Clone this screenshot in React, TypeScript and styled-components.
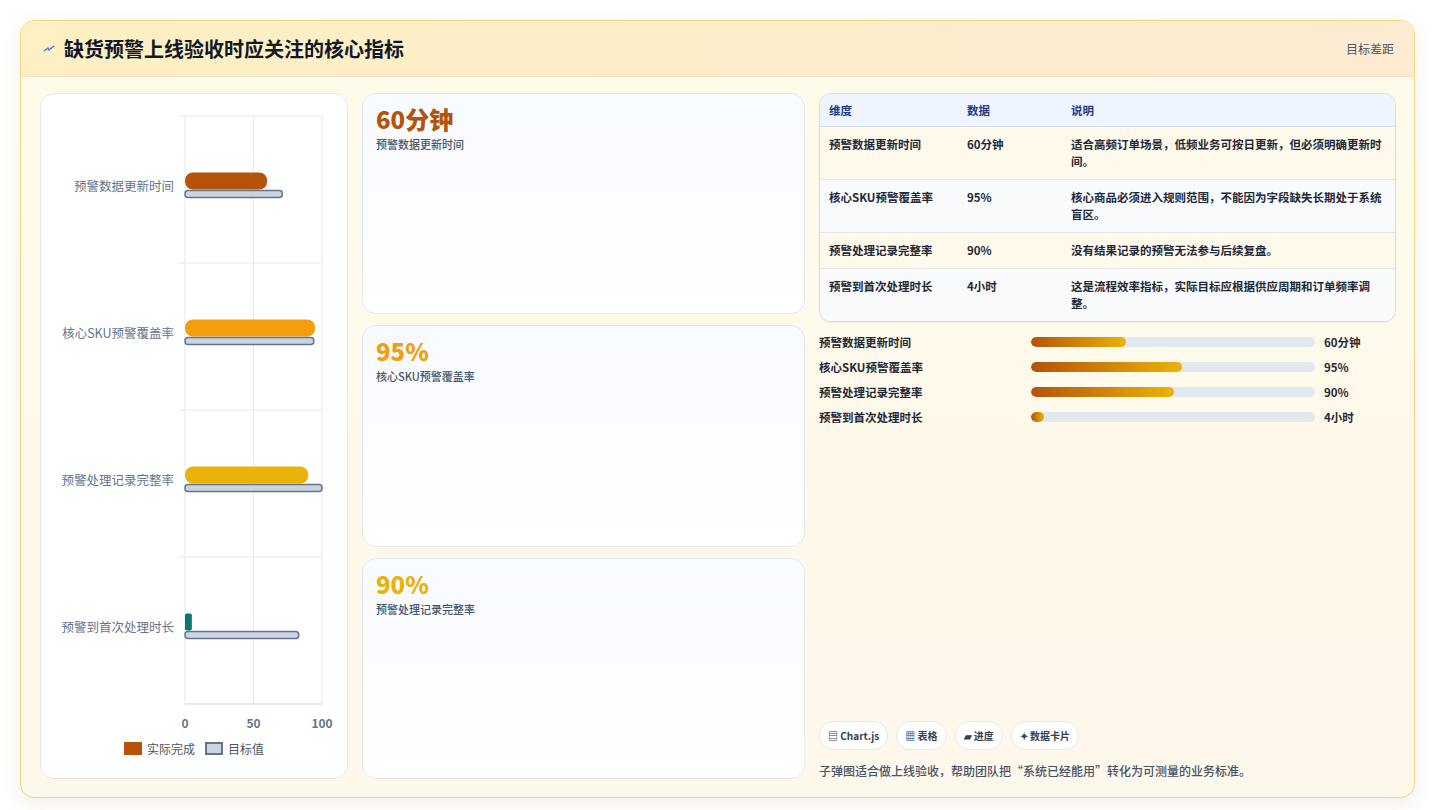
import React from "react";
import styled, { createGlobalStyle } from "styled-components";

const Global = createGlobalStyle`
  html, body { margin: 0; padding: 0; background: #fff; }
  body { font-family: "Noto Sans CJK SC", "Noto Sans", sans-serif; }
`;

const metrics = [
  { name: "预警数据更新时间", value: "60分钟", actual: 60, target: 71, color: "#b45309", pct: 33.5, note: "适合高频订单场景，低频业务可按日更新，但必须明确更新时间。" },
  { name: "核心SKU预警覆盖率", value: "95%", actual: 95, target: 94, color: "#f59e0b", pct: 53, note: "核心商品必须进入规则范围，不能因为字段缺失长期处于系统盲区。" },
  { name: "预警处理记录完整率", value: "90%", actual: 90, target: 100, color: "#eab308", pct: 50.3, note: "没有结果记录的预警无法参与后续复盘。" },
  { name: "预警到首次处理时长", value: "4小时", actual: 5, target: 83, color: "#0f766e", pct: 4.5, note: "这是流程效率指标，实际目标应根据供应周期和订单频率调整。" },
];

const Frame = styled.div`
  margin: 20px 20px 12px 20px;
  height: 776px;
  border: 1px solid #f3d67c;
  border-radius: 14px;
  overflow: hidden;
  background: linear-gradient(180deg, #fffbea 0%, #fef7ec 100%);
  box-shadow: 0 6px 18px rgba(148, 120, 60, 0.12);
  display: flex;
  flex-direction: column;
`;

const Header = styled.div`
  height: 55px;
  display: flex;
  align-items: center;
  justify-content: space-between;
  padding: 0 20px 0 22px;
  background: linear-gradient(90deg, #fdf0c2 0%, #fdebd2 100%);
  border-bottom: 1px solid #f1e4c4;
`;

const Title = styled.h1`
  margin: 0;
  font-size: 20px;
  font-weight: 700;
  color: #111827;
  display: flex;
  align-items: center;
  gap: 9px;
`;

const HeaderNote = styled.span`
  font-size: 12px;
  color: #4b5563;
`;

const Body = styled.div`
  flex: 1;
  display: grid;
  grid-template-columns: 308px 443px 1fr;
  gap: 14px;
  padding: 16px 18px 18px 19px;
  min-height: 0;
`;

const Panel = styled.div`
  background: #fff;
  border: 1px solid #e5e7eb;
  border-radius: 14px;
  display: flex;
  flex-direction: column;
  align-items: center;
`;

const Legend = styled.div`
  display: flex;
  gap: 10px;
  font-size: 12px;
  color: #4b5563;
  margin-top: 6px;
`;

const LegendItem = styled.span`
  display: flex;
  align-items: center;
  gap: 5px;
`;

const Swatch = styled.span<{ $fill: string; $border: string }>`
  width: 18px;
  height: 13px;
  background: ${(p) => p.$fill};
  border: 2px solid ${(p) => p.$border};
  box-sizing: border-box;
`;

const Cards = styled.div`
  display: grid;
  grid-template-rows: repeat(3, 1fr);
  gap: 11px;
`;

const Card = styled.div`
  border: 1px solid #e2e8f0;
  border-radius: 14px;
  background: linear-gradient(180deg, #f7faff 0%, #ffffff 100%);
  padding: 8px 13px;
`;

const BigValue = styled.div<{ $color: string }>`
  font-size: 24px;
  font-weight: 800;
  color: ${(p) => p.$color};
  line-height: 34px;
`;

const CardLabel = styled.div`
  font-size: 11px;
  font-weight: 500;
  color: #475569;
`;

const Right = styled.div`
  display: flex;
  flex-direction: column;
  min-width: 0;
`;

const Table = styled.table`
  width: 100%;
  border-collapse: separate;
  border-spacing: 0;
  border: 1px solid #d7dee8;
  border-radius: 12px;
  overflow: hidden;
  font-size: 11.5px;
  box-shadow: 0 1px 2px rgba(0, 0, 0, 0.06);
`;

const Th = styled.th`
  text-align: left;
  font-weight: 700;
  color: #1e3a8a;
  background: #eef5ff;
  padding: 8px 9px;
  border-bottom: 1px solid #d7dee8;
`;

const Tr = styled.tr<{ $alt: boolean }>`
  background: ${(p) => (p.$alt ? "#f8fafc" : "#fff9ec")};
`;

const Td = styled.td<{ $last?: boolean }>`
  padding: 9px 9px;
  vertical-align: top;
  color: #1f2937;
  font-weight: 600;
  line-height: 17px;
  border-bottom: ${(p) => (p.$last ? "none" : "1px solid #e5e7eb")};
`;

const Bars = styled.div`
  display: flex;
  flex-direction: column;
  gap: 6px;
  margin-top: 10px;
`;

const BarRow = styled.div`
  display: grid;
  grid-template-columns: 212px 1fr 72px;
  align-items: center;
  font-size: 11.5px;
  font-weight: 600;
  color: #1f2937;
  height: 19px;
`;

const Track = styled.div`
  height: 10px;
  border-radius: 5px;
  background: #e2e8f0;
  margin-right: 9px;
  overflow: hidden;
`;

const Fill = styled.div`
  height: 100%;
  border-radius: 5px;
  background: linear-gradient(90deg, #b45309 0%, #eab308 100%);
`;

const Chips = styled.div`
  margin-top: auto;
  display: flex;
  gap: 8px;
`;

const Chip = styled.span`
  font-size: 10px;
  font-weight: 700;
  color: #334155;
  border: 1px solid #e5e7eb;
  background: #fff;
  border-radius: 14px;
  padding: 6px 8px;
`;

const Foot = styled.div`
  margin-top: 12px;
  font-size: 12px;
  font-weight: 500;
  color: #475569;
`;

const Chart = () => {
  const x0 = 144, w = 137, top = 22, band = 147;
  const sx = (v: number) => x0 + (v / 100) * w;
  return (
    <svg width="306" height="640">
      {[0, 50, 100].map((v) => (
        <line key={v} x1={sx(v)} x2={sx(v)} y1={top} y2={top + band * 4} stroke="#e5e7eb" />
      ))}
      {[0, 1, 2, 3].map((i) => (
        <line key={i} x1={x0 - 6} x2={x0 + w} y1={top + band * i} y2={top + band * i} stroke="#e5e7eb" />
      ))}
      <line x1={x0} x2={x0 + w} y1={top + band * 4} y2={top + band * 4} stroke="#d1d5db" />
      {metrics.map((m, i) => {
        const cy = top + band * i + band / 2;
        const aw = sx(m.actual) - x0;
        return (
          <g key={m.name}>
            <text x={x0 - 11} y={cy + 1} textAnchor="end" fontSize="12.5" fill="#64748b">{m.name}</text>
            <rect x={x0} y={cy - 17} width={aw} height={17} rx={Math.min(8, aw / 4)} fill={m.color} />
            <rect x={x0} y={cy + 1} width={sx(m.target) - x0} height={7} rx={3} fill="#cbd5e1" stroke="#64748b" strokeWidth="1.5" />
          </g>
        );
      })}
      {[0, 50, 100].map((v) => (
        <text key={v} x={sx(v)} y={top + band * 4 + 24} textAnchor="middle" fontSize="12" fontWeight="600" fill="#64748b">{v}</text>
      ))}
    </svg>
  );
};

export default function App() {
  return (
    <>
      <Global />
      <Frame>
        <Header>
          <Title>
            <svg width="12" height="8" viewBox="0 0 12 8"><path d="M1 6 L5 3 L6 5 L11 1" stroke="#4f6bd8" strokeWidth="1.4" fill="none" /></svg>
            缺货预警上线验收时应关注的核心指标
          </Title>
          <HeaderNote>目标差距</HeaderNote>
        </Header>
        <Body>
          <Panel>
            <Chart />
            <Legend>
              <LegendItem><Swatch $fill="#b45309" $border="#b45309" />实际完成</LegendItem>
              <LegendItem><Swatch $fill="#cbd5e1" $border="#64748b" />目标值</LegendItem>
            </Legend>
          </Panel>
          <Cards>
            {metrics.slice(0, 3).map((m) => (
              <Card key={m.name}>
                <BigValue $color={m.color}>{m.value}</BigValue>
                <CardLabel>{m.name}</CardLabel>
              </Card>
            ))}
          </Cards>
          <Right>
            <Table>
              <thead>
                <tr>
                  <Th style={{ width: 120 }}>维度</Th>
                  <Th style={{ width: 86 }}>数据</Th>
                  <Th>说明</Th>
                </tr>
              </thead>
              <tbody>
                {metrics.map((m, i) => (
                  <Tr key={m.name} $alt={i % 2 === 1}>
                    <Td $last={i === 3}>{m.name}</Td>
                    <Td $last={i === 3}>{m.value}</Td>
                    <Td $last={i === 3}>{m.note}</Td>
                  </Tr>
                ))}
              </tbody>
            </Table>
            <Bars>
              {metrics.map((m) => (
                <BarRow key={m.name}>
                  <span>{m.name}</span>
                  <Track><Fill style={{ width: `${m.pct}%` }} /></Track>
                  <span>{m.value}</span>
                </BarRow>
              ))}
            </Bars>
            <Chips>
              <Chip>▤ Chart.js</Chip>
              <Chip>▦ 表格</Chip>
              <Chip>▰ 进度</Chip>
              <Chip>✦ 数据卡片</Chip>
            </Chips>
            <Foot>子弹图适合做上线验收，帮助团队把“系统已经能用”转化为可测量的业务标准。</Foot>
          </Right>
        </Body>
      </Frame>
    </>
  );
}
